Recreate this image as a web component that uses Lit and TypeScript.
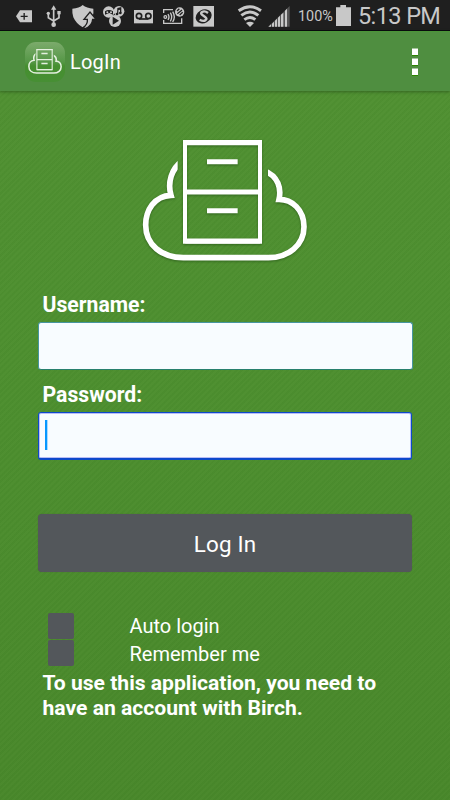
import { LitElement, html, css, svg } from "lit";
import { customElement } from "lit/decorators.js";

const cabinet = (id: string, weight: number) => svg`
  <clipPath id=${id}><path d="M0 0H143V212H414V0H570V420H0Z"/></clipPath>
  <path clip-path="url(#${id})" d="M158 93C124 115 112 158 123 196C72 198 47 242 47 285C47 345 95 382 160 383H415C475 383 522 345 522 290C522 239 486 208 447 208C454 178 447 138 400 121" fill="none" stroke-width=${17 * weight} stroke-linejoin="miter"/>
  <path d="M165 36H390V335H165Z" fill="none" stroke-width=${12 * weight}/>
  <path d="M166 186H390M166 333H390M160 38H395" stroke-width=${15 * weight}/>
  <path d="M231 95H323M231 242H323" stroke-width=${15 * weight}/>`;

@customElement("app-root")
export class AppRoot extends LitElement {
  static styles = css`
    :host {
      display: flex;
      flex-direction: column;
      width: 450px;
      height: 800px;
      overflow: hidden;
      color: #fff;
      font-family: Roboto, sans-serif;
      background:
        repeating-linear-gradient(135deg, rgba(20, 70, 10, 0.03) 0 2px, rgba(255, 255, 255, 0.01) 2px 4px),
        linear-gradient(#519133, #4d8f2f 50%, #49882b);
    }
    svg { display: block; flex: none; }
    .status {
      display: flex;
      height: 31px;
      flex: none;
      box-sizing: border-box;
      background: #1f1f1f;
      border-bottom: 1px solid #08060e;
      color: #c8c8c8;
    }
    .status .pct {
      width: 37px;
      margin-left: 6px;
      font-size: 14.4px;
      line-height: 33px;
      white-space: nowrap;
    }
    .status .time {
      margin-left: 6px;
      font-size: 23.5px;
      line-height: 33px;
      letter-spacing: -0.6px;
      white-space: nowrap;
    }
    .bar {
      display: flex;
      align-items: center;
      height: 60px;
      flex: none;
      box-sizing: border-box;
      padding: 0 32px 0 25px;
      background: #4f8e40;
      border-top: 1px solid #4b9438;
      box-shadow: 0 1px 3px rgba(25, 60, 15, 0.5);
    }
    .app-icon {
      width: 40px;
      height: 40px;
      border-radius: 11px;
      background: linear-gradient(#7cab6c, #559746 50%, #458f2f 60%, #478f34);
    }
    .bar .title { margin-left: 5px; font-size: 20px; letter-spacing: 0.2px; }
    .dots {
      display: flex;
      flex-direction: column;
      gap: 2px;
      margin-left: auto;
    }
    .dot { width: 6px; height: 6px; background: #fff; border-top: 1px solid #a5c59c; border-bottom: 1px solid #2c8500; }
    .logo { margin: 39px 0 0 130px; overflow: visible; filter: drop-shadow(0 1px 1px rgba(20, 60, 10, 0.5)); }
    .form { display: flex; flex-direction: column; padding: 22px 38px 0; }
    .label { margin-left: 4.5px; height: 30px; font-size: 21.2px; line-height: 26px; font-weight: 700; }
    .field {
      display: flex;
      align-items: center;
      height: 48px;
      box-sizing: border-box;
      border: 1px solid #4795a0;
      border-bottom-color: #28806d;
      border-radius: 3px;
      background: #f8fcff;
      margin: 0 -0.5px 12px 0;
    }
    .field.focus {
      border: 1px solid #0d49cb;
      border-bottom-width: 2px;
      box-shadow: inset 0 0 0 1px #b9bdf5;
      margin: 0 0 54px;
    }
    .caret { width: 2px; height: 30px; margin: 0 0 2px 6px; background: #0798ff; box-shadow: 1px 0 #a9dcff; }
    .button {
      height: 58px;
      box-sizing: border-box;
      border-radius: 4px;
      background: #53575b;
      box-shadow: 0 0 1px #45623b;
      text-align: center;
      font-size: 22.4px;
      line-height: 60px;
      letter-spacing: 0.2px;
    }
    .options { display: flex; gap: 55.5px; margin: 40px 0 0 10px; }
    .checks { display: flex; flex-direction: column; gap: 1px; padding-top: 1px; }
    .check { width: 26px; height: 26px; border-radius: 2px; background: #53575b; }
    .names { padding-top: 1px; font-size: 20px; line-height: 27.5px; }
    .note { margin: 2px 0 0 4.5px; font-size: 21.1px; line-height: 25px; font-weight: 700; white-space: nowrap; }
  `;

  render() {
    return html`
      <div class="status">
        <svg width="225" height="30" viewBox="0 0 675 90" fill="#c8c8c8">
          <path d="M48 49L60 31H96V67H60Z"/><path d="M62 49H83M72.500 39V59" stroke="#1f1f1f" stroke-width="4"/>
          <g fill="none" stroke="#c8c8c8" stroke-width="5"><path d="M161 24V72M145 42V53L161 63L177 53V39"/></g>
          <path d="M161 16L169 29H153Z"/><circle cx="161" cy="74" r="7"/><circle cx="145" cy="40" r="5"/><path d="M172 33h10v10h-10z"/>
          <path d="M217 26Q238 25 248 15Q260 25 280 26Q282 40 277 54Q269 72 248 82Q229 72 220 52Q216 39 217 26Z"/>
          <path d="M248 84Q264 73 262 58H252L270 36L288 58H278Q277 77 256 86Z" stroke="#1f1f1f" stroke-width="4"/>
          <circle cx="326" cy="36" r="17"/><circle cx="357" cy="34" r="16"/><circle cx="345" cy="63" r="18"/>
          <g fill="#1f1f1f"><path d="M315 34Q326 26 339 34V44L328 39L315 44Z"/><path d="M352 24L364 21V39H360V29L355 31V43H351Z"/><path d="M338 50V74L357 62Z"/><circle cx="351" cy="42" r="4"/><circle cx="361" cy="39" r="4"/></g>
          <circle cx="322" cy="37" r="3"/><circle cx="333" cy="37" r="3"/>
          <path d="M402 30H459V70H402Z"/><g fill="none" stroke="#1f1f1f" stroke-width="5"><circle cx="417" cy="48" r="8"/><circle cx="445" cy="48" r="8"/><path d="M417 57H445"/></g>
          <g fill="none" stroke="#c8c8c8" stroke-width="4"><path d="M519 29H491V39M491 60V70H545V55"/><circle cx="496" cy="51" r="4"/><path d="M504 42Q510 51 504 60M511 38Q519 51 511 64M518 35Q528 51 518 66"/></g>
          <circle cx="539" cy="36" r="14"/><path d="M532 41L546 30M531 33L538 26M539 45L548 37" stroke="#1f1f1f" stroke-width="4"/>
          <path d="M580 18H642V80H580Z"/><ellipse cx="611" cy="49" rx="25" ry="20" fill="#1f1f1f" transform="rotate(-28 611 49)"/>
          <path d="M624 39Q614 31 606 36C594 44 628 52 617 60Q610 66 599 59" fill="none" stroke="#c8c8c8" stroke-width="7"/>
        </svg>
        <svg width="67" height="30" viewBox="0 0 201 90" fill="#c8c8c8">
          <g fill="none" stroke="#c8c8c8" stroke-width="9"><path d="M41 32Q75 8 108 32M49 46Q75 26 100 46M58 59Q75 46 91 59"/></g><path d="M63 69Q75 61 87 69L75 81Z"/>
          <path d="M130 80L194 18V80Z" fill="#555"/>
          <path d="M130 80L138 73V80ZM141 71L147 65V80H141ZM150 62L156 56V80H150ZM159 53L165 47V80H159ZM168 44L175 38V80H168ZM180 32L186 26V80H180Z"/>
        </svg>
        <span class="pct">100%</span>
        <svg width="17" height="30" viewBox="0 0 51 90"><path d="M16 15H33V22H48V78H3V22H16Z" fill="#c8c8c8"/></svg>
        <span class="time">5:13 PM</span>
      </div>
      <div class="bar">
        <div class="app-icon"><svg width="40" height="40" viewBox="0 0 120 120"><g transform="translate(2 15) scale(.204)" stroke="#e4f0df">${cabinet("icon-cut", 1.35)}</g></svg></div>
        <span class="title">LogIn</span>
        <div class="dots"><div class="dot"></div><div class="dot"></div><div class="dot"></div></div>
      </div>
      <svg class="logo" width="190" height="140" viewBox="0 0 570 420" stroke="#fff">${cabinet("logo-cut", 1)}</svg>
      <div class="form">
        <div class="label">Username:</div>
        <div class="field"></div>
        <div class="label">Password:</div>
        <div class="field focus"><div class="caret"></div></div>
        <div class="button">Log In</div>
        <div class="options">
          <div class="checks"><div class="check"></div><div class="check"></div></div>
          <div class="names"><div>Auto login</div><div>Remember me</div></div>
        </div>
        <div class="note">To use this application, you need to<br>have an account with Birch.</div>
      </div>
    `;
  }
}
